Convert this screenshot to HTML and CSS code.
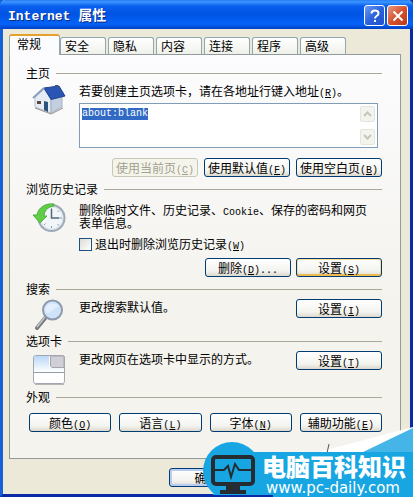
FILE: index.html
```html
<!DOCTYPE html>
<html lang="zh-CN">
  <head>
    <meta charset="utf-8" />
    <meta name="viewport" content="width=device-width, initial-scale=1.0" />
    <title>Internet 属性</title>
    <link rel="stylesheet" href="styles.css">
  </head>
  <body>
    <div class="window">
      <header class="titlebar">
        <h1 class="title"><span class="title-latin">Internet&nbsp;</span>属性</h1>
        <button class="caption help" aria-label="帮助">
          <svg width="18" height="18" viewBox="0 0 18 18" fill="none" stroke="#fff" stroke-width="2">
            <path d="M5.500 6.500C5.500 2.500 12.500 2.500 12.500 6.500C12.500 9 9 8.500 9 11.500M9 13V15" />
          </svg>
        </button>
        <button class="caption close" aria-label="关闭">
          <svg width="18" height="18" viewBox="0 0 18 18" stroke="#fff" stroke-width="2">
            <path d="M4.500 4.500L13.500 13.500M13.500 4.500L4.500 13.500" />
          </svg>
        </button>
      </header>

      <nav class="tabs" role="tablist">
        <button class="tab active" role="tab" aria-selected="true">常规</button>
        <button class="tab" role="tab">安全</button>
        <button class="tab" role="tab">隐私</button>
        <button class="tab" role="tab">内容</button>
        <button class="tab" role="tab">连接</button>
        <button class="tab" role="tab">程序</button>
        <button class="tab" role="tab">高级</button>
      </nav>

      <main class="panel">
        <section class="group">
          <h2 class="group-title">主页</h2>
          <div class="group-body">
            <svg class="icon" width="34" height="32" viewBox="0 0 34 32">
              <path d="M3 12L12 4L19 14V28L3 22Z" fill="#e6ecf4" stroke="#b3bfce" />
              <path d="M19 14L30 11V22L19 28Z" fill="#c3cfdf" stroke="#a3b1c4" />
              <path d="M12 3L27 1L33 11L19 14.500Z" fill="#2b55b4" stroke="#1f428f" />
              <path d="M12 3L1 13" stroke="#8a9dbd" stroke-width="2" />
              <path d="M23 0H26V2H23Z" fill="#3e4f80" />
              <path d="M12 16L16 17V27L12 25Z" fill="#2d527f" />
              <path d="M5 16H9V19H5Z" fill="#57483f" />
              <path d="M3 23L19 29L31 23" fill="none" stroke="#9a8f8c" />
            </svg>
            <div class="content">
              <label class="text" for="homepage">若要创建主页选项卡，请在各地址行键入地址<span class="key">(<u>R</u>)</span>。</label>
              <div class="address">
                <textarea id="homepage" class="address-input" spellcheck="false" autofocus>about:blank</textarea>
                <div class="scroll">
                  <button class="arrow" aria-label="向上" disabled><svg width="9" height="6" viewBox="0 0 9 6"><path d="M1 5L4.500 1.500L8 5" /></svg></button>
                  <button class="arrow" aria-label="向下" disabled><svg width="9" height="6" viewBox="0 0 9 6"><path d="M1 1L4.500 4.500L8 1" /></svg></button>
                </div>
              </div>
            </div>
          </div>
          <div class="actions home-actions">
            <button class="btn" disabled>使用当前页<span class="key">(<u>C</u>)</span></button>
            <button class="btn">使用默认值<span class="key">(<u>F</u>)</span></button>
            <button class="btn">使用空白页<span class="key">(<u>B</u>)</span></button>
          </div>
        </section>

        <section class="group">
          <h2 class="group-title">浏览历史记录</h2>
          <div class="group-body">
            <svg class="icon" width="34" height="32" viewBox="0 0 34 32">
              <circle cx="19.500" cy="17" r="13" fill="#dfe7ee" stroke="#9daab5" stroke-width="2" />
              <circle cx="19.500" cy="17" r="10.500" fill="#f3f6f9" />
              <path d="M19.500 7V9M19.500 25V27M27 17H30M12 24L13.500 22.500M25.500 23L27 24.500M25.500 11L27 9.500" stroke="#8c9cab" />
              <path d="M19.500 8V17H27" fill="none" stroke="#53697d" stroke-width="1.500" />
              <path d="M22 3C13 2 6 7 5 14H1L8 22L15 15H12C12.500 10 15 6 22 5Z" fill="#5fce46" stroke="#4fb043" />
            </svg>
            <div class="content">
              <p class="text tight">删除临时文件、历史记录、<span class="key">Cookie</span>、保存的密码和网页表单信息。</p>
              <label class="check"><input type="checkbox" /><span>退出时删除浏览历史记录<span class="key">(<u>W</u>)</span></span></label>
            </div>
          </div>
          <div class="actions">
            <button class="btn">删除<span class="key">(<u>D</u>)...</span></button>
            <button class="btn hot">设置<span class="key">(<u>S</u>)</span></button>
          </div>
        </section>

        <section class="group search">
          <h2 class="group-title">搜索</h2>
          <div class="group-body short">
            <svg class="icon" width="34" height="32" viewBox="0 0 34 32">
              <path d="M5 29L14 18" stroke="#777a82" stroke-width="4" stroke-linecap="round" />
              <path d="M5 28L13 18" stroke="#c4c7cd" stroke-width="1.500" />
              <circle cx="20.500" cy="11" r="9.500" fill="#cee3fa" stroke="#8d99ad" stroke-width="2" />
              <path d="M13 10C15 4 22 3 27 7C23 8 20 14 14 14Z" fill="#e2effc" />
            </svg>
            <p class="text fill">更改搜索默认值。</p>
            <button class="btn">设置<span class="key">(<u>I</u>)</span></button>
          </div>
        </section>

        <section class="group">
          <h2 class="group-title">选项卡</h2>
          <div class="group-body short">
            <svg class="icon" width="34" height="34" viewBox="0 0 34 34">
              <defs>
                <linearGradient id="tabBlue" x1="0" y1="0" x2="0" y2="1">
                  <stop offset="0" stop-color="#b9d7f8" />
                  <stop offset="1" stop-color="#fff" />
                </linearGradient>
              </defs>
              <rect x="1.500" y="4.500" width="31" height="28" rx="2" fill="#fff" stroke="#a3a6b0" />
              <path d="M2 5H17V16H32V21H2Z" fill="url(#tabBlue)" />
              <path d="M18.500 5H32V16.500H20L18.500 15Z" fill="#cfcfd5" stroke="#a5a5af" />
              <path d="M2 21.500H32" stroke="#969aa5" />
              <path d="M3 33.500H32" stroke="#b5b5b5" />
            </svg>
            <p class="text fill">更改网页在选项卡中显示的方式。</p>
            <button class="btn">设置<span class="key">(<u>T</u>)</span></button>
          </div>
        </section>

        <section class="group">
          <h2 class="group-title">外观</h2>
          <div class="actions spread">
            <button class="btn">颜色<span class="key">(<u>O</u>)</span></button>
            <button class="btn">语言<span class="key">(<u>L</u>)</span></button>
            <button class="btn">字体<span class="key">(<u>N</u>)</span></button>
            <button class="btn">辅助功能<span class="key">(<u>E</u>)</span></button>
          </div>
        </section>
      </main>

      <footer class="footer">
        <button class="btn ok">确定</button>
      </footer>
    </div>

    <aside class="brand">
      <svg class="brand-shape" width="210" height="70" viewBox="0 0 210 70">
        <path d="M112 26L210 0V30H112Z" fill="#fff" />
        <path d="M158 26L210 1V30H158Z" fill="#45b5e8" />
        <path d="M126 17L124 26" stroke="#555" />
        <circle cx="29" cy="44" r="29" fill="#18a6e2" />
        <path d="M29 25H210V70H70V68H10Z" fill="#18a6e2" />
        <path d="M0 68H70V70H0Z" fill="#0b2aa8" />
        <rect x="10" y="30" width="40" height="27" rx="3" fill="none" stroke="#252c32" stroke-width="4" />
        <path d="M12 43H21L25 39L28 50L32 37L36 43H48" fill="none" stroke="#252c32" stroke-width="2" />
        <path d="M23 58H37V63H43V67H17V63H23Z" fill="#252c32" />
      </svg>
      <div class="brand-text">
        <strong class="brand-name">电脑百科知识</strong>
        <span class="brand-url">www.pc-daily.com</span>
      </div>
    </aside>

    <script>
      document.getElementById("homepage").focus();
      document.getElementById("homepage").select();
    </script>
  </body>
</html>
```
FILE: styles.css
```css
* {
  box-sizing: border-box;
}
body {
  position: relative;
  margin: 0;
  overflow: hidden;
  color: #000;
  font: 12px/16px "Noto Sans CJK SC", sans-serif;
}
h1,
h2,
p {
  margin: 0;
  font-weight: normal;
}
button,
textarea {
  margin: 0;
  padding: 0;
  color: inherit;
  font: inherit;
}
.window {
  background: #ece9d8;
  border: 3px solid #0b2aa8;
  border-top: 0;
  border-left-color: #1660d8;
}
.key {
  font-family: "Liberation Mono", monospace;
  font-size: 10px;
  line-height: 1px;
}

/* title bar */
.titlebar {
  display: flex;
  align-items: center;
  gap: 2px;
  height: 29px;
  margin: 0 -3px;
  padding: 2px 5px 0 8px;
  border-radius: 5px 5px 0 0;
  background: linear-gradient(#2a7cf4 0, #3a95ff 2px, #0a5fee 6px, #0054e3 14px, #0563f8 24px, #0040c4 29px);
}
.title {
  flex: 1;
  color: #fff;
  font-size: 14px;
  font-weight: bold;
  text-shadow: 1px 1px #0a2a80;
}
.title-latin {
  font-family: "Liberation Mono", monospace;
  font-size: 13px;
}
.caption {
  display: flex;
  align-items: center;
  justify-content: center;
  width: 21px;
  height: 21px;
  border: 1px solid #fff;
  border-radius: 3px;
}
.help {
  background: linear-gradient(135deg, #6f9cf5, #2c62dc 50%, #2050c8);
}
.close {
  background: linear-gradient(135deg, #e99a82, #d7512d 50%, #b83a18);
}

/* tabs */
.tabs {
  position: relative;
  display: flex;
  align-items: flex-end;
  gap: 2px;
  padding: 5px 6px 0;
}
.tab {
  width: 46px;
  height: 18px;
  padding: 0 0 0 4px;
  border: 1px solid #91a7b4;
  border-bottom-color: #919b9c;
  border-radius: 3px 3px 0 0;
  background: linear-gradient(#fff, #f0f0ea);
  line-height: 16px;
  text-align: left;
}
.tab.active {
  width: 51px;
  height: 21px;
  margin-right: -2px;
  padding: 0 0 3px 7px;
  border-top: 2px solid #e5a02d;
  border-bottom: 0;
  background: #fcfcfe;
}
.panel {
  margin: -1px 9px 0 6px;
  padding: 10px 18px 22px 15px;
  border: 1px solid #919b9c;
  background: linear-gradient(#fcfcfe, #f4f3ee 60%);
}

/* groups */
.group {
  margin-bottom: 4px;
}
.group.search {
  margin-bottom: 2px;
}
.group-title {
  display: flex;
  align-items: center;
  gap: 6px;
  padding-left: 1px;
  font-size: 12px;
}
.group-title::after {
  content: "";
  flex: 1;
  border-top: 1px solid #aca899;
}
.group-body {
  display: flex;
  align-items: flex-start;
  padding-top: 2px;
}
.icon {
  flex: none;
  margin: 2px 13px 0 7px;
}
.short .icon {
  margin-top: 0;
}
.content {
  flex: 1;
}
.text {
  display: block;
}
.fill {
  flex: 1;
}
.tight {
  padding: 4px 14px 0 0;
  line-height: 13px;
}
.check {
  display: flex;
  align-items: center;
  gap: 3px;
  margin-top: 7px;
}
.check input {
  appearance: none;
  width: 13px;
  height: 13px;
  margin: 0;
  border: 1px solid #1c5180;
  background: linear-gradient(135deg, #dcdcd7, #fff);
}

/* home page address box */
.address {
  display: flex;
  height: 45px;
  margin: 4px 4px 0 0;
  border: 1px solid #7f9db9;
  background: #fff;
}
.address-input {
  flex: 1;
  min-width: 0;
  padding: 4px 2px;
  border: 0;
  outline: 0;
  resize: none;
  overflow: hidden;
  background: transparent;
  font: 10px/12px "Liberation Mono", monospace;
}
.address-input::selection {
  background: #316ac5;
  color: #fff;
}
.scroll {
  display: flex;
  flex-direction: column;
  justify-content: space-between;
  padding: 2px;
}
.arrow {
  display: flex;
  align-items: center;
  justify-content: center;
  width: 15px;
  height: 16px;
  border: 1px solid #e5e5dd;
  border-radius: 2px;
  background: #f4f4ef;
}
.arrow path {
  fill: none;
  stroke: #c5c5ba;
  stroke-width: 2;
}

/* push buttons */
.btn {
  width: 86px;
  height: 19px;
  border: 1px solid #003c74;
  border-radius: 3px;
  background: linear-gradient(#fff, #f3f3ef 70%, #dcd8cc);
  line-height: 16px;
  white-space: nowrap;
}
.btn:disabled {
  border-color: #c9c7ba;
  background: #f5f4ea;
  color: #a1a192;
}
.btn.hot {
  box-shadow: inset 0 -2px #eebb51, inset 0 0 0 1px #fbdc94;
}
.actions {
  display: flex;
  justify-content: flex-end;
  gap: 5px;
  margin-top: 6px;
}
.home-actions {
  margin-top: 10px;
  gap: 6px;
}
.spread {
  margin-top: 8px;
  padding-left: 4px;
  gap: 8px;
}
.spread .btn {
  flex: 1;
}
.footer {
  display: flex;
  justify-content: center;
  padding: 9px 0 7px;
}
.btn.ok {
  width: 75px;
  box-shadow: inset 0 0 0 2px #b8cdf2;
}

/* site badge over the lower right corner */
.brand {
  position: absolute;
  right: 0;
  bottom: 0;
  width: 210px;
  height: 70px;
}
.brand-shape {
  display: block;
}
.brand-text {
  position: absolute;
  right: 7px;
  bottom: 1px;
  display: flex;
  flex-direction: column;
  color: #fff;
}
.brand-name {
  font-size: 24px;
  font-weight: 900;
  line-height: 28px;
}
.brand-url {
  padding-left: 4px;
  font: 15px/16px "DejaVu Sans", sans-serif;
}
```
